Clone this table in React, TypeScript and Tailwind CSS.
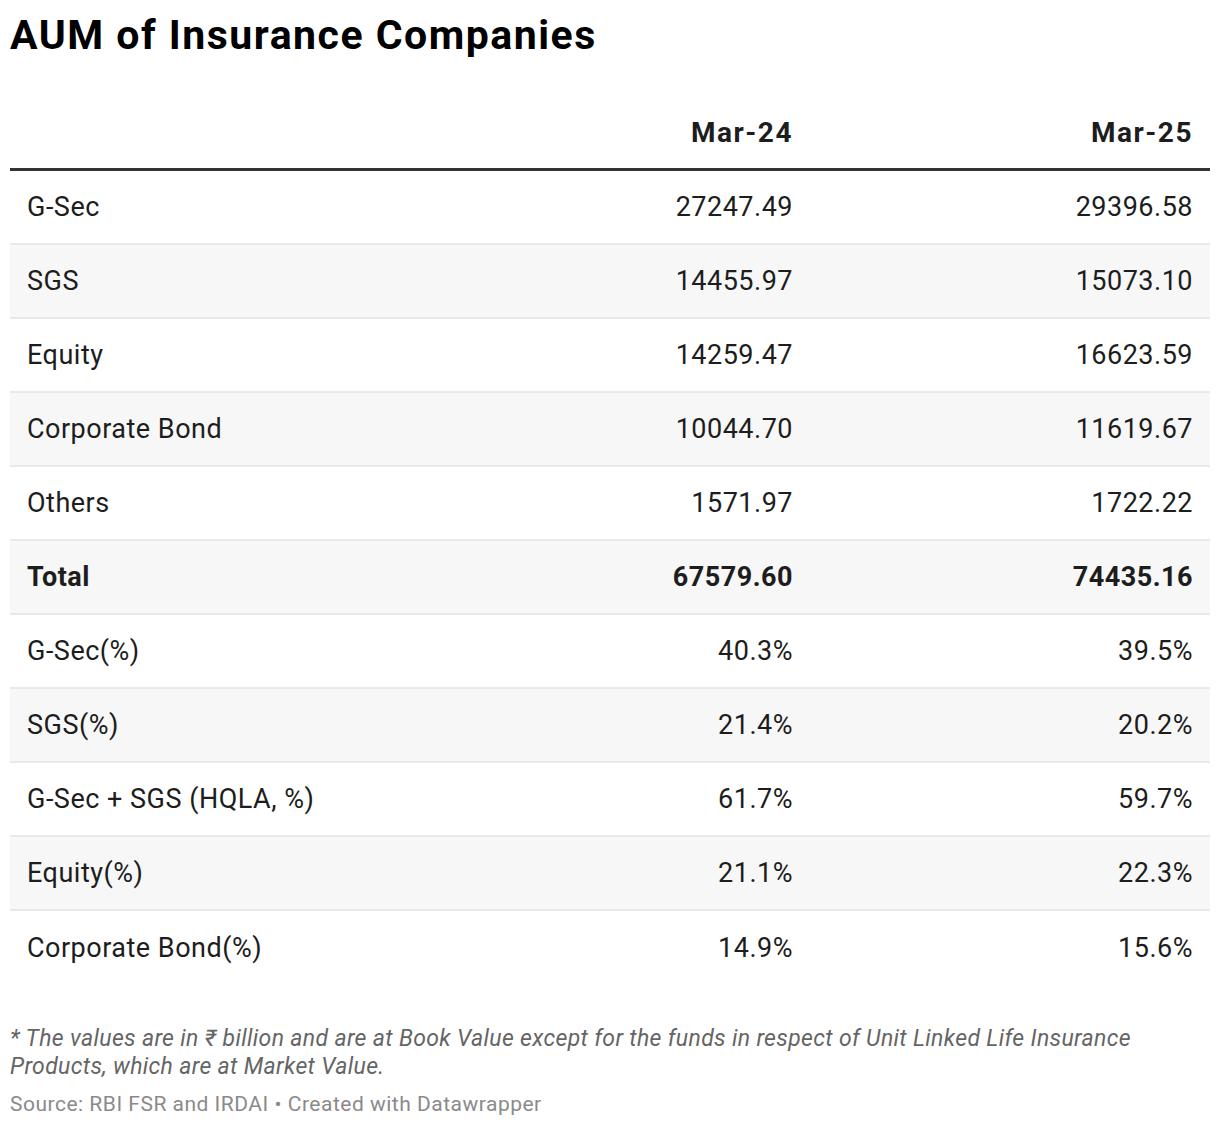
import React from "react";

const rows: { label: string; a: string; b: string; bold?: boolean }[] = [
  { label: "G-Sec", a: "27247.49", b: "29396.58" },
  { label: "SGS", a: "14455.97", b: "15073.10" },
  { label: "Equity", a: "14259.47", b: "16623.59" },
  { label: "Corporate Bond", a: "10044.70", b: "11619.67" },
  { label: "Others", a: "1571.97", b: "1722.22" },
  { label: "Total", a: "67579.60", b: "74435.16", bold: true },
  { label: "G-Sec(%)", a: "40.3%", b: "39.5%" },
  { label: "SGS(%)", a: "21.4%", b: "20.2%" },
  { label: "G-Sec + SGS (HQLA, %)", a: "61.7%", b: "59.7%" },
  { label: "Equity(%)", a: "21.1%", b: "22.3%" },
  { label: "Corporate Bond(%)", a: "14.9%", b: "15.6%" },
];

export default function App() {
  return (
    <div className="w-[1220px] h-[1126px] bg-white px-[10px] pt-[12px] text-[#1d1d1d]" style={{ fontFamily: "Roboto, 'Liberation Sans', sans-serif" }}>
      <h1 className="text-[41px] leading-[46px] font-bold text-black tracking-[1.5px]">AUM of Insurance Companies</h1>
      <div className="mt-[60px] grid grid-cols-3 border-b-[3px] border-[#333333] pb-[20px]">
        <div></div>
        <div className="text-right pr-[17px] text-[28px] leading-[30px] font-bold tracking-[1.5px]">Mar-24</div>
        <div className="text-right pr-[17px] text-[28px] leading-[30px] font-bold tracking-[1.5px]">Mar-25</div>
      </div>
      {rows.map((r, i) => (
        <div
          key={r.label}
          className={`grid grid-cols-3 h-[74px] items-center text-[27px] tracking-[0.5px] ${i % 2 === 1 ? "bg-[#f7f7f7]" : "bg-white"} ${i < rows.length - 1 ? "border-b-2 border-[#e9e9e9]" : ""} ${r.bold ? "font-bold" : ""}`}
        >
          <div className="pl-[17px]">{r.label}</div>
          <div className="text-right pr-[17px]">{r.a}</div>
          <div className="text-right pr-[17px]">{r.b}</div>
        </div>
      ))}
      <div className="mt-[40px] text-[23px] leading-[28px] italic text-[#656565] tracking-[0.35px]">
        * The values are in ₹ billion and are at Book Value except for the funds in respect of Unit Linked Life Insurance Products, which are at Market Value.
      </div>
      <div className="mt-[11px] text-[21px] leading-[24px] text-[#8a8a8a] tracking-[0.5px]">
        Source: RBI FSR and IRDAI • Created with Datawrapper
      </div>
    </div>
  );
}
